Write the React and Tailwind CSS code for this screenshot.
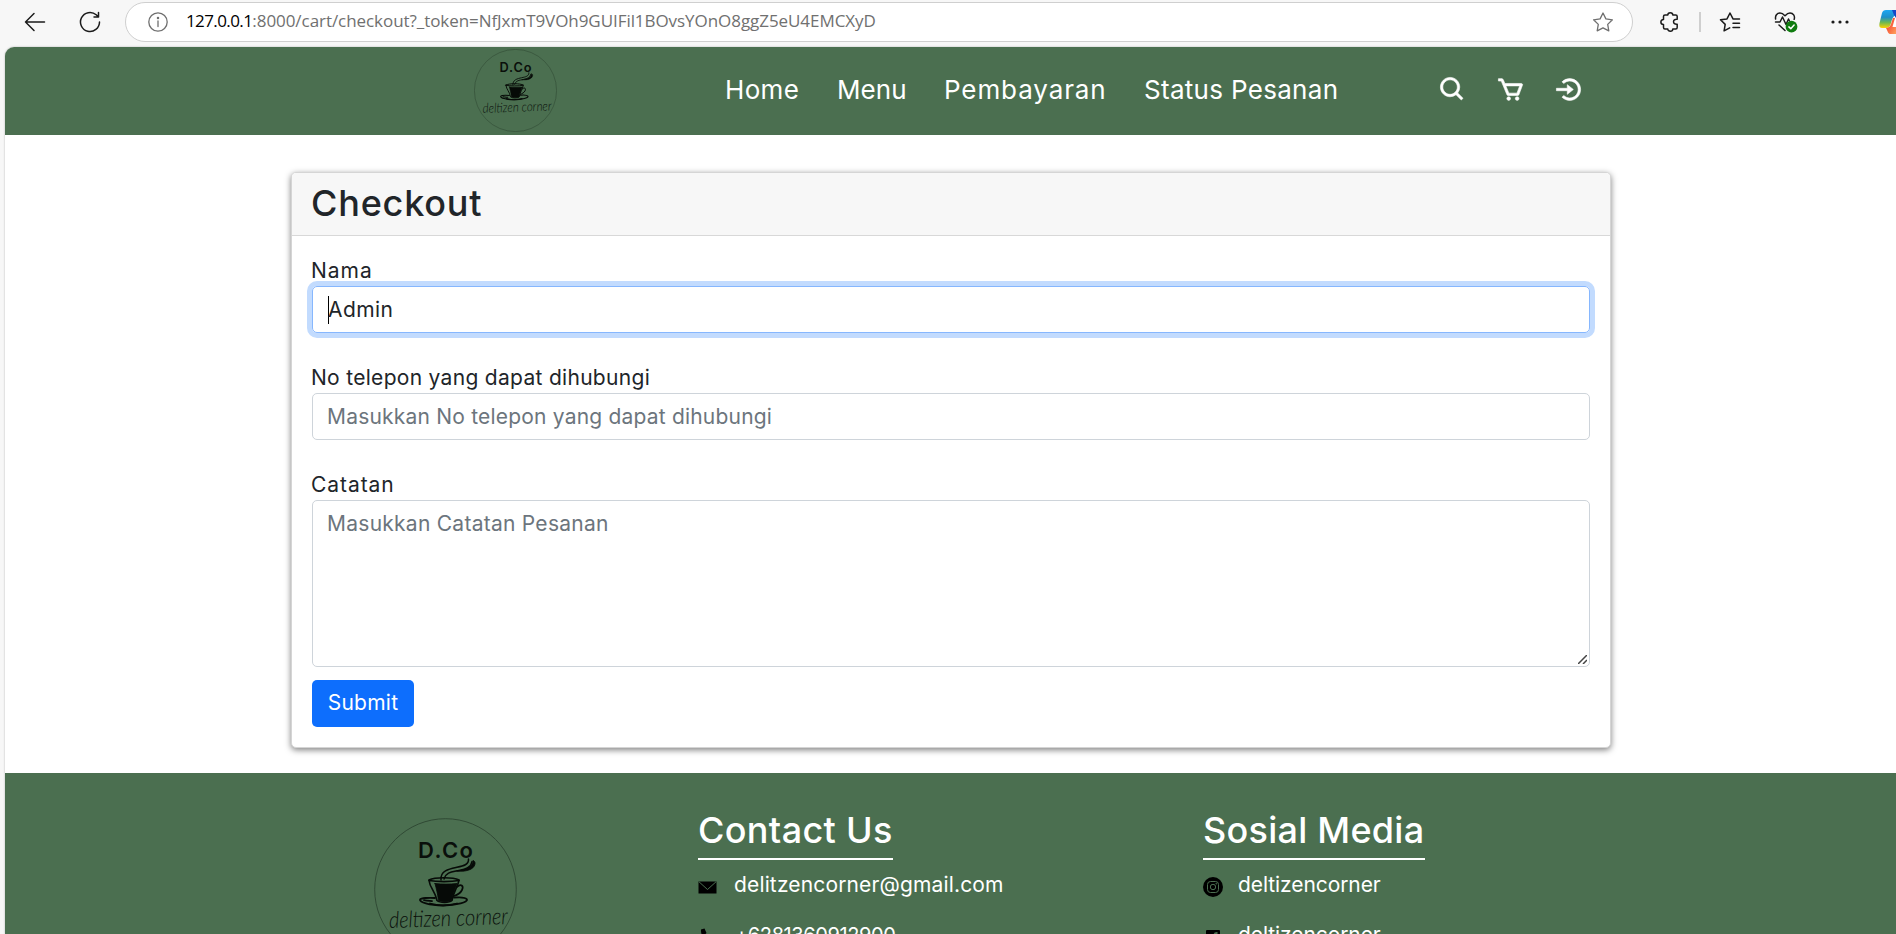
import React from "react";
import { BiSearch, BiCart, BiLogInCircle } from "react-icons/bi";

function Logo({ className }) {
  return (
    <svg viewBox="0 0 143 143" className={className} fill="none">
      <circle cx="71.5" cy="71.5" r="70.8" stroke="#2c4531" strokeWidth="0.9" />
      <text x="44" y="40" textLength="55" fontSize="22" fontWeight="600" fontFamily="Inter, sans-serif" fill="#0a0f0b">D.Co</text>
      <g stroke="#060a07" strokeLinecap="round" strokeLinejoin="round">
        <path d="M67 62c-1-9 8-11 15-12.500c7-1.500 13-2.500 12.500-8.500M70 61c2-7 8-7 15-8.500c7-1.500 12-3 13-9" strokeWidth="1.500" />
        <path d="M83 53c8 1 17-1 18-7c.3-2-.5-3-2-3.500c0 6-6 9-16 10.500Z" fill="#060a07" strokeWidth="0.800" />
        <path d="M55 62.500c1 8 6 10 8 20c3 2.500 12 2.500 15 0c2-10 5-12 7-20c-8 1.500-22 1.500-30 0Z" strokeWidth="1.600" />
        <path d="M61 65.500c7 .8 15 .8 22 0c-2 6-4 10-5.500 17c-3 1.500-10 1.500-13 0c-1-7-2-11-3.500-17Z" fill="#060a07" strokeWidth="0.800" />
        <path d="M55 62c6-3 24-3 30 0M83 69c4-4 7-1 5 3c-1.500 3-5 5-8 6" strokeWidth="1.700" />
        <path d="M61 80c-6-.5-14 0-15 1.500c-1 2.500 9 6 23 6s25-3.500 24-6c-1-2-7-2.500-13-2" strokeWidth="1.800" />
        <path d="M56 85.500c8 2.300 18 2.300 27 0M58 83.200c-3-.5-6-.7-8-1" strokeWidth="1.800" />
      </g>
      <text x="15" y="108" textLength="119" lengthAdjust="spacingAndGlyphs" fontSize="23" fontWeight="300" fontStyle="italic" fontFamily="Lato, sans-serif" fill="#0a0f0b" transform="rotate(-2 74 104)">deltizen corner</text>
    </svg>
  );
}

function BrowserBar() {
  return (
    <header className="flex h-[47px] items-center bg-[#f7f7f7] pb-[3px] font-['Open_Sans',sans-serif]">
      <svg className="ml-[24px] h-[20px] w-[22px]" viewBox="0 0 22 20" fill="none" stroke="#1b1b1b" strokeWidth="1.500" strokeLinecap="round" strokeLinejoin="round">
        <path d="M10 1.500L1.500 10L10 18.500M1.500 10H20.500" />
      </svg>
      <svg className="ml-[33px] h-[22px] w-[22px]" viewBox="0 0 22 22" fill="none" stroke="#1b1b1b" strokeWidth="1.500" strokeLinecap="round" strokeLinejoin="round">
        <path d="M20.500 11a9.500 9.500 0 1 1-3.300-7.200L19.500 6M19.500 1.500V6H15" />
      </svg>
      <div className="ml-[24px] flex h-[40px] w-[1508px] items-center rounded-full border border-[#cfcfcf] bg-white">
        <svg className="ml-[22px] h-[20px] w-[20px]" viewBox="0 0 20 20" fill="none" stroke="#6f6f6f" strokeWidth="1.300" strokeLinecap="round">
          <circle cx="10" cy="10" r="9.200" />
          <path d="M10 9v5.500" />
          <circle cx="10" cy="6" r="0.600" fill="#6f6f6f" />
        </svg>
        <div className="mb-[2px] ml-[18px] whitespace-nowrap text-[17px] leading-[24px] text-[#707070]">
          <span className="tracking-[-0.6px] text-black">127.0.0.1</span>
          <span className="tracking-[-0.06px]">:8000/cart/checkout?_token=NfJxmT9VOh9GUIFil1BOvsYOnO8ggZ5eU4EMCXyD</span>
        </div>
        <svg className="ml-auto mr-[18px] h-[20px] w-[22px]" viewBox="0 0 22 20" fill="none" stroke="#6f6f6f" strokeWidth="1.300" strokeLinejoin="round">
          <path d="M11 1l2.900 5.900l6.500.9l-4.700 4.600l1.100 6.400L11 15.800l-5.800 3l1.100-6.400L1.600 7.800l6.500-.9Z" />
        </svg>
      </div>
      <svg className="ml-[27px] h-[20px] w-[19px]" viewBox="0 0 19 20" fill="none" stroke="#1b1b1b" strokeWidth="1.500" strokeLinejoin="round">
        <path d="M3.500 4.500Q3.500 3 5 3H7.800C7.800 0 12.800 0 12.800 3H15.700Q17.200 3 17.200 4.500V7.200C12.300 6.500 12.300 13 17.200 12.300V15.500Q17.200 17 15.700 17H12.800C12.800 20 7.800 20 7.800 17H5Q3.500 17 3.500 15.500V12.600C0 12.600 0 7.600 3.500 7.600Z" />
      </svg>
      <span className="ml-[20px] h-[20px] w-[2px] bg-[#cfcfcf]" />
      <svg className="ml-[18px] h-[20px] w-[22px]" viewBox="0 0 22 20" fill="none" stroke="#1b1b1b" strokeWidth="1.500" strokeLinecap="round" strokeLinejoin="round">
        <path d="M14 6.900L11 1L8 6.900l-6.500.9l4.700 4.600l-1.100 6.400l5.600-2.900M14 7H20.500M14 11.300H20.500M14 15.500H20.500" />
      </svg>
      <svg className="ml-[33px] h-[22px] w-[24px]" viewBox="0 0 24 22" fill="none" stroke="#1b1b1b" strokeWidth="1.500" strokeLinecap="round" strokeLinejoin="round">
        <path d="M1.600 8C1 4.500 3 2 6 2C8.500 2 9.800 3.500 11 4.800C12.200 3.500 13.500 2 16 2C19.200 2 21.200 5 20.200 8.300M1.500 11H6l2.500-5l3.500 7.500L14.500 8L15.500 10M5 14l6 5.500" />
        <circle cx="17.500" cy="15.700" r="5.900" fill="#107c10" stroke="none" />
        <path d="M14.900 15.900l1.900 1.800l3.300-3.600" stroke="#fff" />
      </svg>
      <svg className="ml-[33px] h-[4px] w-[18px]" viewBox="0 0 18 4" fill="#1b1b1b">
        <circle cx="2" cy="2" r="1.600" />
        <circle cx="9" cy="2" r="1.600" />
        <circle cx="16" cy="2" r="1.600" />
      </svg>
      <svg className="ml-[30px] h-[26px] w-[17px] shrink-0" viewBox="0 0 17 26">
        <defs>
          <linearGradient id="cool" x1="0" y1="0" x2="0" y2="1">
            <stop offset="0" stopColor="#1ea7f2" />
            <stop offset="0.400" stopColor="#1f8fc9" />
            <stop offset="0.700" stopColor="#6fb94f" />
            <stop offset="1" stopColor="#ffd200" />
          </linearGradient>
          <linearGradient id="warm" x1="0" y1="0" x2="1" y2="1">
            <stop offset="0" stopColor="#e5392f" />
            <stop offset="0.500" stopColor="#f9653f" />
            <stop offset="1" stopColor="#ffa25c" />
          </linearGradient>
        </defs>
        <path d="M7 1H17V6C14 7 13 10 12 14C11 18 9.500 19 6 19H3C0 19 0 16 .8 13L3 4C3.600 2 5 1 7 1Z" fill="url(#cool)" />
        <path d="M13 1H17V9L15 6Z" fill="#1447c8" />
        <path d="M7 19C10.500 18.500 11.500 17 12.500 13.500L14 9H17V25H12C9 25 9 23 8.200 21.500C7.800 20.500 7.500 20 7 19Z" fill="url(#warm)" />
        <path d="M13.500 18L16 9H17V18Z" fill="#fff" />
      </svg>
    </header>
  );
}

function Navbar() {
  return (
    <nav className="flex h-[88px] items-center rounded-tl-[9px] bg-[#4b6f50] text-[26px] leading-[38px] text-white">
      <Logo className="mb-px ml-[469px] h-[83px] w-[83px]" />
      <ul className="mb-[3px] ml-[168px] flex whitespace-nowrap">
        <li className="w-[112px] tracking-[0.35px]">Home</li>
        <li className="w-[107px] tracking-[0.1px]">Menu</li>
        <li className="w-[200px] tracking-[0.9px]">Pembayaran</li>
        <li className="w-[200px] tracking-[0.3px]">Status Pesanan</li>
      </ul>
      <div className="mb-[3px] ml-[94px] flex items-center gap-[29px] text-[29px]">
        <BiSearch strokeWidth="0.5" />
        <BiCart strokeWidth="0.5" />
        <BiLogInCircle strokeWidth="0.5" />
      </div>
    </nav>
  );
}

function CheckoutCard() {
  return (
    <section className="ml-[286px] flex h-[576px] w-[1320px] flex-col rounded-[5px] border border-[#d5d5d5] bg-white shadow-[0_2px_6px_rgba(0,0,0,0.5)]">
      <div className="h-[63px] rounded-t-[4px] border-b border-[#d8d8d8] bg-[#f7f7f7] px-5 pt-[9px]">
        <h1 className="-ml-px text-[36px] font-medium leading-[42px] tracking-[0.8px]">Checkout</h1>
      </div>
      <form className="flex flex-col items-start px-5 pt-5">
        <label className="-ml-px tracking-[1px]">Nama</label>
        <div className="flex h-[47px] w-full items-center rounded-[5px] border border-[#86b7fe] px-[15px] ring-[5px] ring-[#c2dbfe]">
          <span className="h-[28px] w-px bg-black" />
          <span className="-ml-px tracking-[0.4px]">Admin</span>
        </div>
        <label className="-ml-px mt-[30px] tracking-[0.3px]">No telepon yang dapat dihubungi</label>
        <div className="flex h-[47px] w-full items-center rounded-[5px] border border-[#ced4da] px-[14px] tracking-[0.2px] text-[#6c757d]">
          Masukkan No telepon yang dapat dihubungi
        </div>
        <label className="-ml-px mt-[30px] tracking-[0.95px]">Catatan</label>
        <div className="flex h-[167px] w-full justify-between rounded-[5px] border border-[#ced4da] pl-[14px] pt-[8px] tracking-[0.26px] text-[#6c757d]">
          <span>Masukkan Catatan Pesanan</span>
          <svg className="mb-[2px] mr-[2px] h-[9px] w-[9px] self-end" viewBox="0 0 9 9" stroke="#444" strokeWidth="1.500">
            <path d="M0 9L9 0M5 9L9 5" />
          </svg>
        </div>
        <button type="button" className="mt-[13px] h-[47px] w-[102px] rounded-[5px] bg-[#0d6efd] pb-[2px] tracking-[0.25px] text-white">Submit</button>
      </form>
    </section>
  );
}

function Footer() {
  return (
    <footer className="flex h-[161px] shrink-0 items-start overflow-hidden bg-[#4b6f50] pt-[36px] text-white">
      <Logo className="ml-[369px] mt-[9px] h-[143px] w-[143px] shrink-0" />
      <div className="ml-[181px] flex w-[505px] shrink-0 flex-col items-start whitespace-nowrap">
        <h2 className="h-[51px] w-[195px] border-b-2 border-white text-[36px] font-medium leading-[42px] tracking-[0.35px]">Contact Us</h2>
        <div className="mt-[10px] flex h-[30px] items-center">
          <svg className="mt-[4px] h-[13px] w-[19px]" viewBox="0 0 19 13">
            <path d="M.5.500H18.500V12.500H.5Z" fill="#000" />
            <path d="M1 .8L9.500 8.500L18 .8" fill="none" stroke="#4b6f50" strokeWidth="1" />
          </svg>
          <span className="ml-[17px] tracking-[0.15px]">delitzencorner@gmail.com</span>
        </div>
        <div className="mt-[20px] flex h-[30px] items-center">
          <svg className="ml-[2px] mt-[4px] h-[18px] w-[18px]" viewBox="0 0 18 18">
            <path d="M1 1.500L4.500.500L6.500 5L4.500 7C5.500 9.500 8 12 10.500 13L12.500 11L17 13L16 17C8 17.500 .5 10 1 1.500Z" fill="#000" />
          </svg>
          <span className="ml-[17px] text-[20px] tracking-[-0.4px]">+6281360912900</span>
        </div>
      </div>
      <div className="flex flex-col items-start whitespace-nowrap">
        <h2 className="h-[51px] w-[222px] border-b-2 border-white text-[36px] font-medium leading-[42px] tracking-[0.25px]">Sosial Media</h2>
        <div className="mt-[10px] flex h-[30px] items-center">
          <svg className="mt-[4px] h-[20px] w-[20px]" viewBox="0 0 20 20" fill="none" stroke="#4b6f50">
            <circle cx="10" cy="10" r="10" fill="#000" stroke="none" />
            <rect x="4.500" y="4.500" width="11" height="11" rx="3" />
            <circle cx="10" cy="10" r="2.700" />
            <circle cx="13.200" cy="6.800" r="0.400" />
          </svg>
          <span className="ml-[15px] tracking-[-0.08px]">deltizencorner</span>
        </div>
        <div className="mt-[20px] flex h-[30px] items-center">
          <svg className="ml-[3px] mt-[3px] h-[14px] w-[14px]" viewBox="0 0 14 14">
            <rect width="14" height="14" rx="1" fill="#000" />
            <path d="M9.500 14V9H11.500V7H9.500V5Q9.500 4 11.500 4V2Q7.500 1.700 7.500 5V7H6V9H7.500V14Z" fill="#4b6f50" />
          </svg>
          <span className="ml-[18px] tracking-[-0.08px]">deltizencorner</span>
        </div>
      </div>
    </footer>
  );
}

export default function App() {
  return (
    <div className="flex h-[934px] w-[1896px] flex-col overflow-hidden bg-[#f7f7f7] font-['Inter',sans-serif] text-[21px] leading-[30px] text-[#212529]">
      <BrowserBar />
      <main className="ml-[5px] flex flex-1 flex-col rounded-tl-[9px] bg-white shadow-[0_0_2px_rgba(0,0,0,0.3)]">
        <Navbar />
        <div className="h-[638px] pt-[37px]">
          <CheckoutCard />
        </div>
        <Footer />
      </main>
    </div>
  );
}
